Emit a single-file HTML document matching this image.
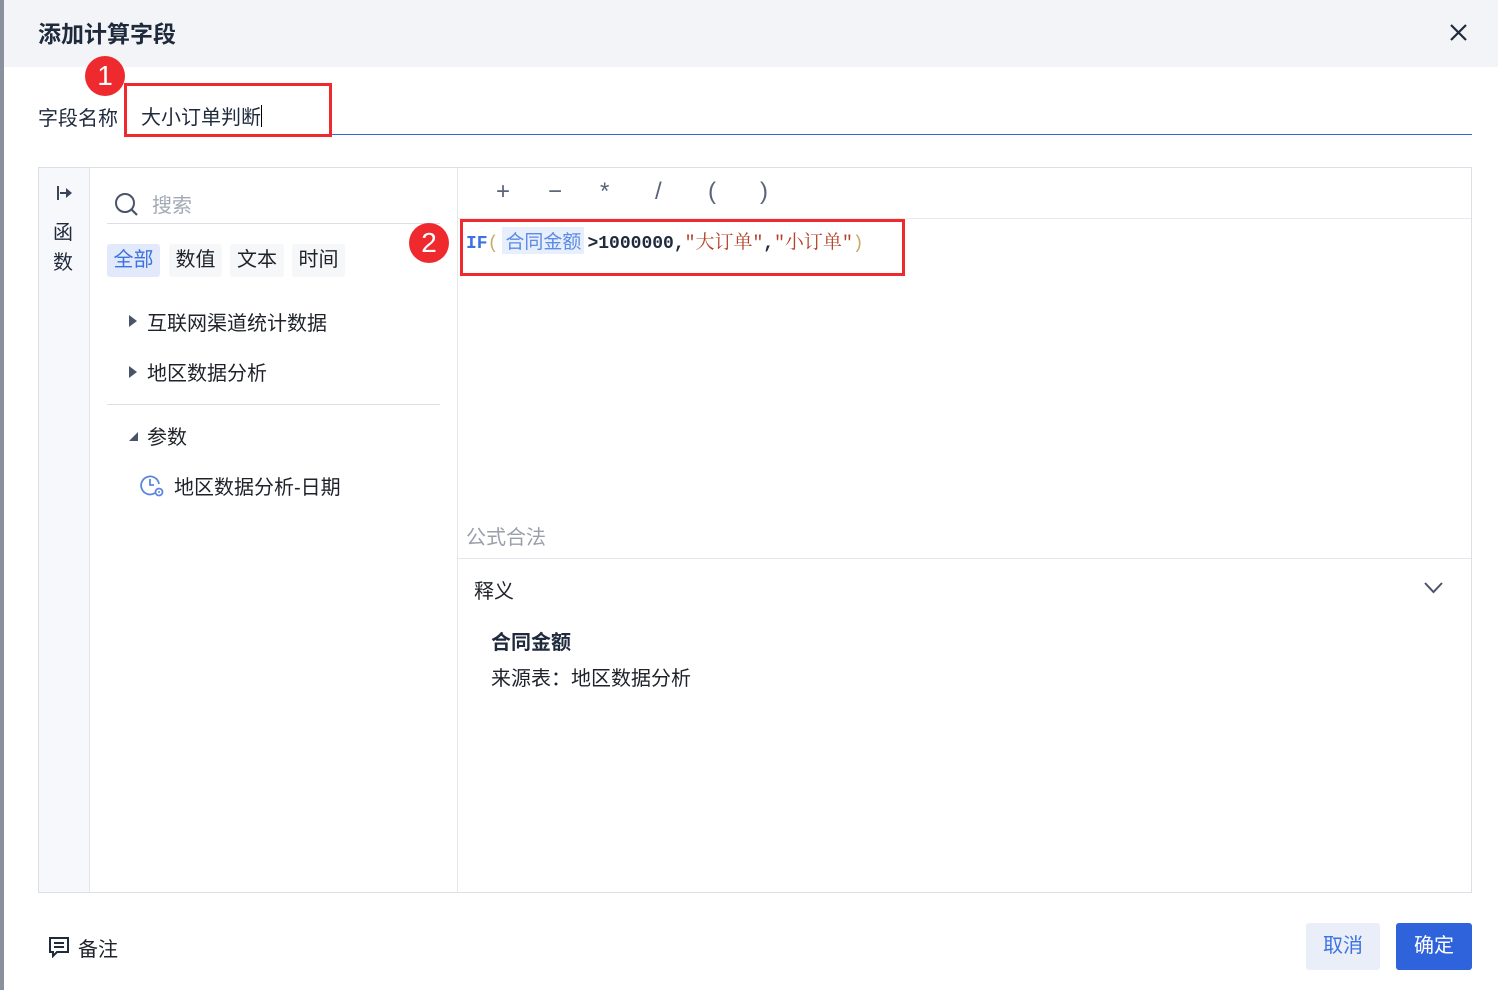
<!DOCTYPE html>
<html><head><meta charset="utf-8"><style>
*{box-sizing:border-box;margin:0;padding:0}
body{width:1498px;height:990px;overflow:hidden;background:#fff;font-family:"Liberation Sans","Noto Sans CJK SC",sans-serif;color:#1f2329;position:relative}
.a{position:absolute}
.mono{font-family:"Liberation Mono","Noto Sans CJK SC",monospace}
</style></head><body>
<div class="a" style="left:0;top:0;width:4px;height:990px;background:#8a909e"></div>
<div class="a" style="left:4px;top:0;width:1494px;height:67px;background:#f2f4f8"></div>
<div class="a" style="left:38px;top:15px;font-size:23px;font-weight:bold;color:#1f2a3d">添加计算字段</div>
<svg class="a" style="left:1449px;top:23px" width="19" height="19" viewBox="0 0 19 19"><path d="M2 2L17 17M17 2L2 17" stroke="#1f2a3d" stroke-width="2.2"/></svg>

<div class="a" style="left:38px;top:102px;font-size:20px;color:#1f2a3d">字段名称</div>
<div class="a" style="left:124px;top:134px;width:1348px;height:1px;background:#3966d6"></div>
<div class="a" style="left:141px;top:101px;font-size:20px;color:#1f2a3d">大小订单判断<span style="display:inline-block;width:1px;height:22px;background:#000;vertical-align:-3px"></span></div>
<div class="a" style="left:124px;top:83px;width:208px;height:54px;border:3px solid #ee2a2e"></div>
<div class="a" style="left:85px;top:56px;width:40px;height:40px;border-radius:50%;background:#ee2a2e;color:#fff;font-size:28px;text-align:center;line-height:40px">1</div>

<div class="a" style="left:38px;top:167px;width:1434px;height:726px;border:1px solid #dcdfe6"></div>
<div class="a" style="left:39px;top:168px;width:51px;height:724px;background:#f7f8fb;border-right:1px solid #e4e6eb"></div>
<svg class="a" style="left:56px;top:185px" width="18" height="16" viewBox="0 0 18 16"><path d="M2 1V15" stroke="#3a4559" stroke-width="2"/><path d="M4 8H10" stroke="#3a4559" stroke-width="2"/><path d="M10 3L16 8L10 13Z" fill="#3a4559"/></svg>
<div class="a" style="left:53px;top:218px;font-size:20px;line-height:30px;width:22px;color:#1f2a3d">函<br>数</div>

<svg class="a" style="left:114px;top:192px" width="26" height="26" viewBox="0 0 26 26"><circle cx="11" cy="11" r="9" fill="none" stroke="#4a5468" stroke-width="2"/><path d="M17.5 17.5L23 23" stroke="#4a5468" stroke-width="2.2"/></svg>
<div class="a" style="left:152px;top:189px;font-size:20px;color:#a3a9b4">搜索</div>
<div class="a" style="left:107px;top:223px;width:333px;height:1px;background:#dcdfe6"></div>
<div class="a" style="left:107px;top:244px;width:53px;height:33px;background:#e1e9fb;border-radius:3px;color:#3d72e0;font-size:20px;text-align:center;line-height:33px">全部</div>
<div class="a" style="left:169px;top:244px;width:53px;height:33px;background:#f6f7f9;border-radius:3px;font-size:20px;text-align:center;line-height:33px">数值</div>
<div class="a" style="left:230px;top:244px;width:54px;height:33px;background:#f6f7f9;border-radius:3px;font-size:20px;text-align:center;line-height:33px">文本</div>
<div class="a" style="left:292px;top:244px;width:53px;height:33px;background:#f6f7f9;border-radius:3px;font-size:20px;text-align:center;line-height:33px">时间</div>

<div class="a" style="left:409px;top:223px;width:40px;height:40px;border-radius:50%;background:#ee2a2e;color:#fff;font-size:28px;text-align:center;line-height:40px">2</div>

<svg class="a" style="left:129px;top:315px" width="8" height="12"><path d="M0 0L8 6L0 12Z" fill="#4a5468"/></svg>
<div class="a" style="left:147px;top:307px;font-size:20px">互联网渠道统计数据</div>
<svg class="a" style="left:129px;top:366px" width="8" height="12"><path d="M0 0L8 6L0 12Z" fill="#4a5468"/></svg>
<div class="a" style="left:147px;top:357px;font-size:20px">地区数据分析</div>
<div class="a" style="left:107px;top:404px;width:333px;height:1px;background:#dcdfe6"></div>
<svg class="a" style="left:129px;top:432px" width="9" height="9"><path d="M9 0V9H0Z" fill="#4a5468"/></svg>
<div class="a" style="left:147px;top:421px;font-size:20px">参数</div>
<svg class="a" style="left:140px;top:474px" width="26" height="24" viewBox="0 0 26 24"><path d="M15 19A9 9 0 1 1 19 10" fill="none" stroke="#5b86e0" stroke-width="1.8"/><path d="M10 5V11H14" fill="none" stroke="#5b86e0" stroke-width="1.8"/><circle cx="19" cy="18" r="3.5" fill="none" stroke="#5b86e0" stroke-width="1.8"/><circle cx="19" cy="18" r="1" fill="#5b86e0"/></svg>
<div class="a" style="left:174px;top:471px;font-size:20px">地区数据分析-日期</div>

<div class="a" style="left:457px;top:168px;width:1px;height:724px;background:#e4e6eb"></div>
<div class="a" style="left:458px;top:218px;width:1013px;height:1px;background:#e8eaee"></div>
<div class="a" style="left:496px;top:178px;font-size:24px;color:#5a6478">
<span class="a" style="left:0">+</span><span class="a" style="left:52px">−</span><span class="a" style="left:104px">*</span><span class="a" style="left:159px">/</span><span class="a" style="left:212px">(</span><span class="a" style="left:264px">)</span></div>
<div class="a mono" style="left:466px;top:229px;font-size:18px;white-space:nowrap;line-height:24px"><span style="color:#3d72e0;font-weight:bold">IF</span><span style="color:#c9a86a">(</span><span style="background:#e8effc;color:#5b8be6;padding:0 3px;margin-left:4px;margin-right:3px;font-size:19px;font-family:'Noto Sans CJK SC',sans-serif">合同金额</span><span style="color:#1f2a3d;font-weight:bold">&gt;1000000,</span><span style="color:#b5432a">"<span style="font-family:'Noto Serif CJK SC',serif;font-weight:normal;font-size:19px">大订单</span>"</span><span style="color:#1f2a3d;font-weight:bold">,</span><span style="color:#b5432a">"<span style="font-family:'Noto Serif CJK SC',serif;font-size:19px">小订单</span>"</span><span style="color:#c9a86a">)</span></div>
<div class="a" style="left:460px;top:219px;width:445px;height:57px;border:3px solid #ee2a2e"></div>

<div class="a" style="left:466px;top:521px;font-size:20px;color:#9aa0ab">公式合法</div>
<div class="a" style="left:458px;top:558px;width:1013px;height:1px;background:#e4e6eb"></div>
<div class="a" style="left:474px;top:575px;font-size:20px">释义</div>
<svg class="a" style="left:1424px;top:582px" width="19" height="12"><path d="M1 1L9.5 10L18 1" fill="none" stroke="#4a5468" stroke-width="2"/></svg>
<div class="a" style="left:491px;top:626px;font-size:20px;font-weight:bold;color:#1f2a3d">合同金额</div>
<div class="a" style="left:491px;top:662px;font-size:20px">来源表：地区数据分析</div>

<svg class="a" style="left:48px;top:936px" width="22" height="22" viewBox="0 0 22 22"><path d="M2 2H20V16H9L5 20V16H2Z" fill="none" stroke="#1f2a3d" stroke-width="2"/><path d="M6 7H16M6 11H16" stroke="#1f2a3d" stroke-width="2"/></svg>
<div class="a" style="left:78px;top:933px;font-size:20px">备注</div>
<div class="a" style="left:1306px;top:923px;width:74px;height:47px;background:#e9eef8;border-radius:3px;color:#3d72e0;font-size:20px;text-align:center;line-height:47px">取消</div>
<div class="a" style="left:1396px;top:923px;width:76px;height:47px;background:#2f63dc;border-radius:3px;color:#fff;font-size:20px;text-align:center;line-height:47px">确定</div>
</body></html>
